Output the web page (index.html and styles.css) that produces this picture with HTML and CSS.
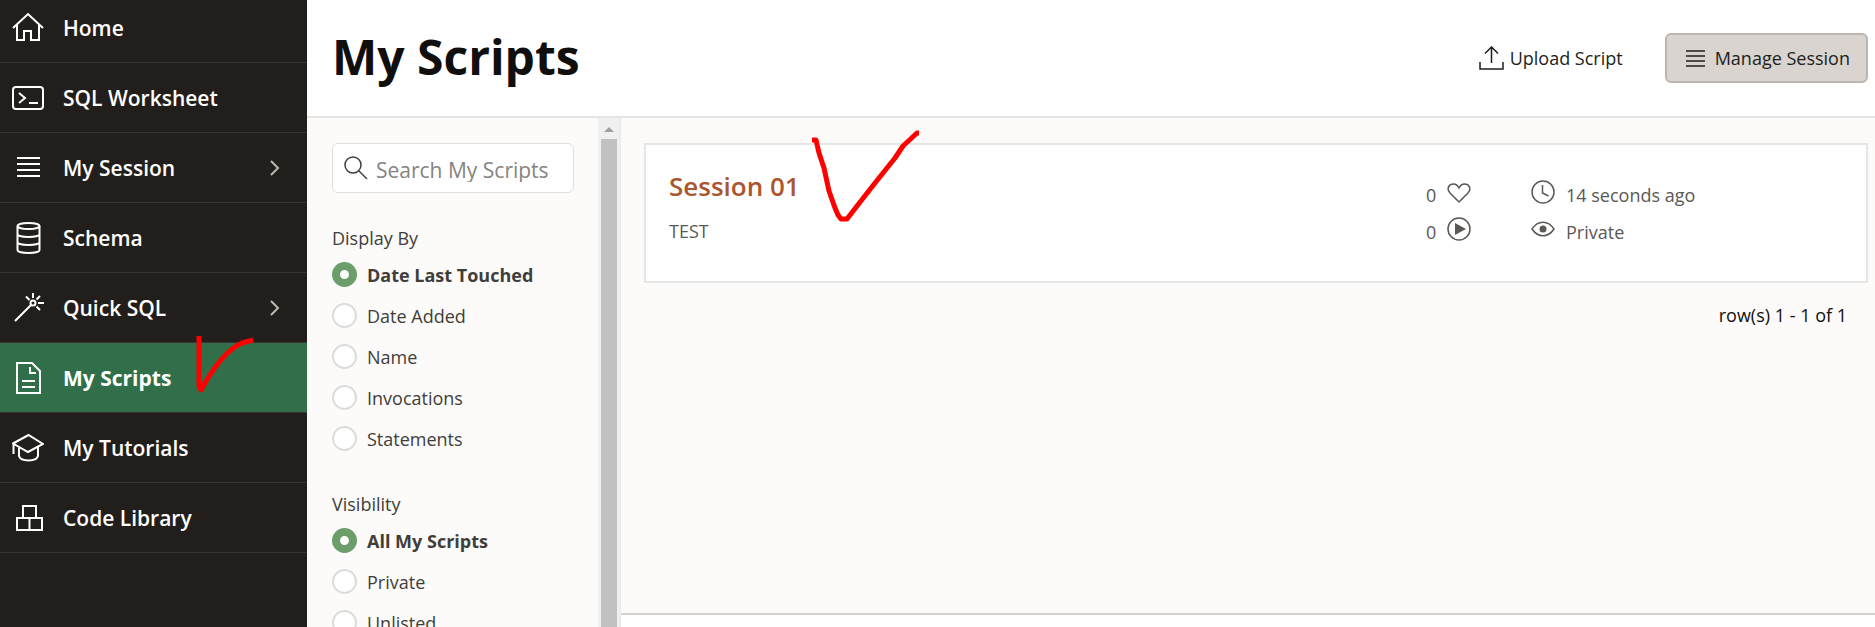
FILE: index.html
```html
<!DOCTYPE html>
<html lang="en">
<head>
  <meta charset="UTF-8" />
  <meta name="viewport" content="width=device-width, initial-scale=1" />
  <title>My Scripts</title>
  <link rel="stylesheet" href="styles.css">
</head>
<body>
  <nav class="sidebar">
    <ul class="nav-list">
      <li>
        <a href="#">
          <svg viewBox="0 0 32 32"><path d="M1 16 16 2l15 14M5 12.500V28h7v-9h7v9h8V12.500"/></svg>
          Home
        </a>
      </li>
      <li>
        <a href="#">
          <svg viewBox="0 0 32 32"><rect x="1" y="5" width="30" height="22" rx="3"/><path d="m7 11 6 5-6 5M17 21h9"/></svg>
          SQL Worksheet
        </a>
      </li>
      <li>
        <a href="#">
          <svg viewBox="0 0 32 32"><path d="M5 6h23M5 12h23M5 18h23M5 24h23"/></svg>
          My Session
          <svg class="chevron" viewBox="0 0 10 16"><path d="m1 1 7 7-7 7"/></svg>
        </a>
      </li>
      <li>
        <a href="#">
          <svg viewBox="0 0 32 32"><ellipse cx="16.500" cy="4" rx="11" ry="3"/><path d="M5.500 4v24c0 4 22 4 22 0V4M5.500 12c0 4 22 4 22 0M5.500 20c0 4 22 4 22 0"/></svg>
          Schema
        </a>
      </li>
      <li>
        <a href="#">
          <svg viewBox="0 0 32 32"><circle cx="21" cy="11" r="2.500"/><path d="M19 13 3 29M21 6V1M26 11h6M17.500 8 14 4.500M24.500 7.500 28 4M24.500 14.500 28 18"/></svg>
          Quick SQL
          <svg class="chevron" viewBox="0 0 10 16"><path d="m1 1 7 7-7 7"/></svg>
        </a>
      </li>
      <li class="current">
        <a href="#" aria-current="page">
          <svg viewBox="0 0 32 32"><path d="M5 1h15l8 8v22H5zM18 5v6h6M10 19h13M10 25h13"/></svg>
          My Scripts
        </a>
      </li>
      <li>
        <a href="#">
          <svg viewBox="0 0 32 32"><path d="M1 11.500 16.500 3 31 12l-15 8zM1.500 12v10M7 16v8c2 6 17 6 19 0v-9"/></svg>
          My Tutorials
        </a>
      </li>
      <li>
        <a href="#">
          <svg viewBox="0 0 32 32"><path d="M11 4h13v12H11zM5 16h25v12H5zM17.500 16v12"/></svg>
          Code Library
        </a>
      </li>
    </ul>
    <svg class="mark mark-nav" viewBox="0 0 62 60"><path d="M4 0v50l2 4C18 32 33 13 47 7l11-3"/></svg>
  </nav>

  <div class="page">
    <header class="page-header">
      <h1>My Scripts</h1>
      <div class="actions">
        <button type="button" class="btn btn-plain">
          <svg viewBox="0 0 26 24"><path d="M1 16v7h23v-7M12.500 17V1M6 7.500 12.500 1 19 7.500"/></svg>
          Upload Script
        </button>
        <button type="button" class="btn btn-fill">
          <svg class="bars" viewBox="0 0 20 18"><path d="M0 2h19M0 7h19M0 12h19M0 17h19"/></svg>
          Manage Session
        </button>
      </div>
    </header>

    <div class="columns">
      <aside class="filters">
        <form class="filter-form">
          <div class="search">
            <svg viewBox="0 0 24 24"><circle cx="9" cy="9" r="8"/><path d="m15 15 8 8"/></svg>
            <input type="text" aria-label="Search My Scripts" placeholder="Search My Scripts">
          </div>

          <fieldset>
            <legend>Display By</legend>
            <label><input type="radio" name="display" checked><span>Date Last Touched</span></label>
            <label><input type="radio" name="display"><span>Date Added</span></label>
            <label><input type="radio" name="display"><span>Name</span></label>
            <label><input type="radio" name="display"><span>Invocations</span></label>
            <label><input type="radio" name="display"><span>Statements</span></label>
          </fieldset>

          <fieldset>
            <legend>Visibility</legend>
            <label><input type="radio" name="visibility" checked><span>All My Scripts</span></label>
            <label><input type="radio" name="visibility"><span>Private</span></label>
            <label><input type="radio" name="visibility"><span>Unlisted</span></label>
          </fieldset>
        </form>
        <div class="scrollbar">
          <div class="scroll-up"></div>
          <div class="scroll-thumb"></div>
        </div>
      </aside>

      <main class="results">
        <article class="card">
          <div class="card-text">
            <h2><a href="#">Session 01</a></h2>
            <p>TEST</p>
          </div>
          <div class="stats counts">
            <div>0 <svg viewBox="0 0 24 24"><path d="M12 22 3 13C-1 8.500 2 4 6.500 4c3 0 4.500 2 5.500 4 1-2 2.500-4 5.500-4C22 4 25 8.500 21 13z"/></svg></div>
            <div>0 <svg viewBox="0 0 24 24"><circle cx="12" cy="12" r="11"/><path class="solid" d="m8 6 11 6-11 6z"/></svg></div>
          </div>
          <div class="stats details">
            <div><svg viewBox="0 0 24 24"><circle cx="12" cy="12" r="11"/><path d="M11.500 5v8l6 3"/></svg> 14 seconds ago</div>
            <div><svg viewBox="0 0 24 24"><path d="M1 12c6-9 16-9 22 0-6 9-16 9-22 0z"/><circle class="solid" cx="12" cy="12" r="3.500"/></svg> Private</div>
          </div>
          <svg class="mark mark-card" viewBox="0 0 110 94"><path d="M3 12h4l3 13 5 15 5 23 6 17 3 7 3 4h6l10-13 18-23 20-25 8-12 14-13h4"/></svg>
        </article>
        <p class="pager">row(s) 1 - 1 of 1</p>
      </main>
    </div>
  </div>
</body>
</html>
```
FILE: styles.css
```css
* {
  box-sizing: border-box;
}

body {
  margin: 0;
  height: 100vh;
  display: flex;
  overflow: hidden;
  font-family: 'Segoe UI', 'Open Sans', 'Noto Sans', sans-serif;
  font-size: 18px;
  line-height: 24px;
  color: #403e3a;
  background: #fff;
}

svg {
  display: block;
  flex: none;
  fill: none;
  stroke: currentColor;
}

h1, h2, p {
  margin: 0;
}

/* left navigation */
.sidebar {
  position: relative;
  flex: none;
  width: 307px;
  background: #221e1b;
}

.nav-list {
  list-style: none;
  margin: -7px 0 0;
  padding: 0;
}

.nav-list li {
  border-bottom: 1px solid #393532;
}

.nav-list a {
  display: flex;
  align-items: center;
  gap: 19px;
  height: 69px;
  padding: 0 27px 0 12px;
  color: #fff;
  font-size: 21px;
  font-weight: 600;
  text-decoration: none;
}

.nav-list svg {
  width: 32px;
  height: 32px;
  stroke-width: 2;
}

.nav-list .chevron {
  width: 10px;
  height: 16px;
  margin-left: auto;
  color: #bbb8b5;
}

.nav-list .current {
  background: #316f4a;
}

.nav-list .current a {
  font-weight: 700;
}

/* title bar */
.page {
  flex: 1;
  min-width: 0;
  display: flex;
  flex-direction: column;
}

.page-header {
  flex: none;
  display: flex;
  align-items: center;
  justify-content: space-between;
  height: 118px;
  padding: 0 7px 0 25px;
  border-bottom: 2px solid #e4e4e3;
}

h1 {
  padding-bottom: 2px;
  font-size: 48px;
  line-height: 64px;
  color: #100f0e;
}

.actions {
  display: flex;
  gap: 20px;
}

.btn {
  display: flex;
  align-items: center;
  gap: 5px;
  height: 50px;
  padding: 0 20px;
  border: 2px solid transparent;
  border-radius: 6px;
  background: none;
  color: #201e1c;
  font: inherit;
  cursor: pointer;
}

.btn svg {
  width: 26px;
  height: 24px;
  stroke-width: 1.5;
}

.btn-fill {
  gap: 9px;
  padding: 0 16px 0 19px;
  background: #d9d4cf;
  border-color: #bcb6b1;
}

.btn .bars {
  width: 20px;
  height: 18px;
}

/* filters */
.columns {
  flex: 1;
  min-height: 0;
  display: flex;
}

.filters {
  flex: none;
  display: flex;
  width: 314px;
  overflow: hidden;
  background: #fcfbfa;
  border-right: 2px solid #ebebeb;
}

.filter-form {
  flex: 1;
  min-width: 0;
  padding: 25px 24px 0 25px;
}

.search {
  display: flex;
  align-items: center;
  gap: 8px;
  height: 50px;
  padding: 0 11px;
  background: #fff;
  border: 1px solid #dfdfde;
  border-radius: 6px;
}

.search svg {
  width: 24px;
  height: 24px;
  stroke-width: 1.5;
}

.search input {
  flex: 1;
  min-width: 0;
  padding: 4px 0 0;
  border: 0;
  outline: 0;
  background: none;
  font: inherit;
  font-size: 21px;
}

.search input::placeholder {
  color: #85837f;
}

fieldset {
  margin: 33px 0 0;
  padding: 0;
  border: 0;
}

legend {
  padding: 0;
  margin-bottom: 4px;
}

fieldset label {
  display: flex;
  align-items: center;
  gap: 10px;
  height: 41px;
}

input[type="radio"] {
  appearance: none;
  width: 25px;
  height: 25px;
  margin: 0;
  background: #fff;
  border: 2px solid #dcdcdb;
  border-radius: 50%;
}

input[type="radio"]:checked {
  border: 8px solid #6b9e6b;
}

input:checked + span {
  font-weight: 700;
}

.scrollbar {
  flex: none;
  width: 21px;
  background: #f0f0f0;
  padding: 9px 2px 0 3px;
}

.scroll-up {
  width: 0;
  margin: 0 auto;
  border: 5px solid transparent;
  border-top: 0;
  border-bottom-color: #a0a0a0;
}

.scroll-thumb {
  height: 100%;
  margin-top: 7px;
  background: #c1c1c1;
}

/* script list */
.results {
  flex: 1;
  margin-bottom: 12px;
  padding: 25px 7px 0 23px;
  background: #fcfbfa;
  border-bottom: 2px solid #d4d3d2;
}

.card {
  position: relative;
  display: flex;
  min-height: 140px;
  padding: 23px;
  background: #fff;
  border: 2px solid #e6e6e6;
}

.card-text {
  flex: 1;
}

h2 {
  font-size: 26px;
  line-height: 36px;
  font-weight: 600;
  margin-bottom: 16px;
}

h2 a {
  color: #ac5630;
  text-decoration: none;
}

.card-text p, .stats {
  color: #5b5855;
}

.card-text p {
  line-height: 22px;
}

.stats {
  display: flex;
  flex-direction: column;
  gap: 13px;
  padding-top: 15px;
}

.stats div {
  display: flex;
  gap: 11px;
}

.stats svg {
  width: 24px;
  height: 24px;
  margin-top: -3px;
  stroke-width: 1.5;
}

.counts {
  width: 105px;
}

.details {
  width: 312px;
}

.solid {
  fill: currentColor;
  stroke: none;
}

.pager {
  padding: 20px 21px 0 0;
  text-align: right;
  color: #100f0e;
}

/* red hand-drawn ticks, over everything else */
.mark {
  position: absolute;
  color: #f00;
  stroke-width: 5;
  stroke-linejoin: round;
}

.mark-nav {
  left: 195px;
  top: 336px;
  width: 62px;
  height: 60px;
}

.mark-card {
  left: 163px;
  top: -17px;
  width: 110px;
  height: 94px;
}
```
